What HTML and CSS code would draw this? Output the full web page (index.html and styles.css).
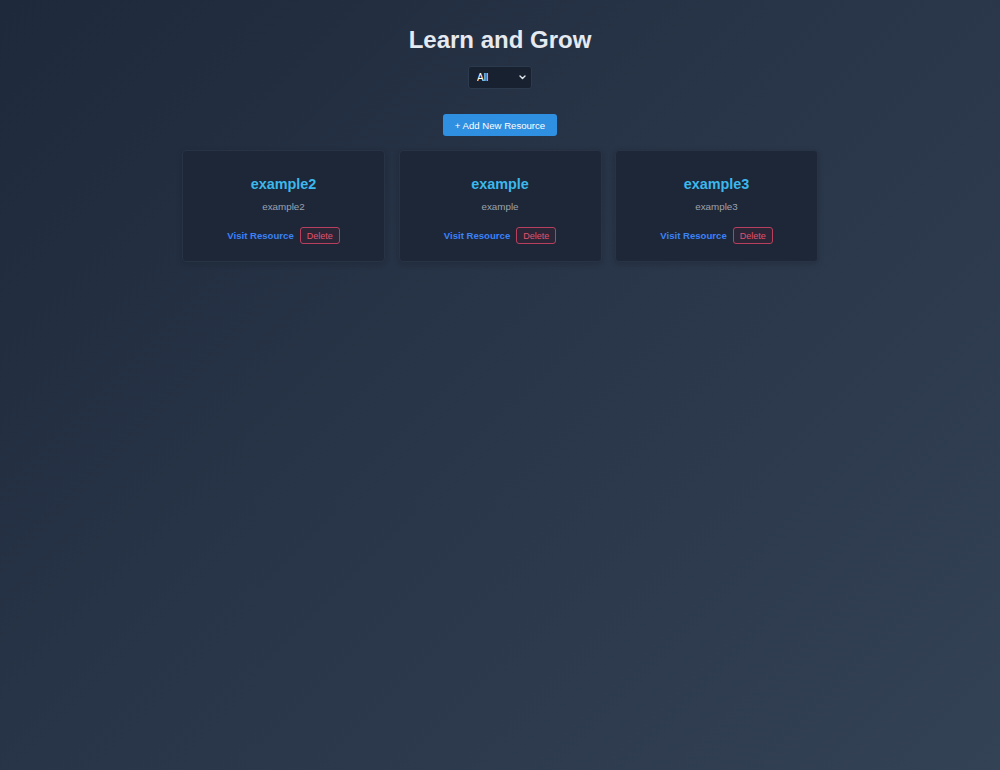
FILE: index.html
```html
<!DOCTYPE html>
<html lang="en">
<head>
    <meta charset="UTF-8">
    <meta name="viewport" content="width=device-width, initial-scale=1.0">
    <title>Learn and Grow</title>
    <link rel="stylesheet" href="styles.css">
</head>
<body>

    <div class="app">
        <h1>Learn and Grow</h1>

        <!-- category filter with a custom chevron -->
        <div class="filter-wrap">
            <select id="categoryFilter" class="filter">
                <option>All</option>
            </select>
            <svg class="filter-arrow" width="7" height="5" viewBox="0 0 7 5">
                <path d="M1 1 L3.5 3.5 L6 1" fill="none" stroke="#e2e8f0" stroke-width="1.4" stroke-linecap="round" stroke-linejoin="round"/>
            </svg>
        </div>

        <button class="add-button">+ Add New Resource</button>

        <div class="resource-list">
            <div class="resource-card">
                <h3>example2</h3>
                <p>example2</p>
                <div class="card-actions">
                    <a href="#" class="visit-link">Visit Resource</a>
                    <button class="delete-button">Delete</button>
                </div>
            </div>

            <div class="resource-card">
                <h3>example</h3>
                <p>example</p>
                <div class="card-actions">
                    <a href="#" class="visit-link">Visit Resource</a>
                    <button class="delete-button">Delete</button>
                </div>
            </div>

            <div class="resource-card">
                <h3>example3</h3>
                <p>example3</p>
                <div class="card-actions">
                    <a href="#" class="visit-link">Visit Resource</a>
                    <button class="delete-button">Delete</button>
                </div>
            </div>
        </div>
    </div>

</body>
</html>
```

FILE: styles.css
```css
/* page background */
html, body {
    height: 100%;
}

body {
    font-family: 'Liberation Sans', Arial, sans-serif;
    background: linear-gradient(135deg, #1e293b 0%, #344256 100%);
    background-attachment: fixed;
    color: #e2e8f0;
    margin: 0;
    padding: 0;
}

.app {
    display: flex;
    flex-direction: column;
    align-items: center;
    padding-top: 25px;
}

h1 {
    font-size: 24px;
    line-height: 30px;
    margin: 0;
    color: #e5e9f0;
}

.filter-wrap {
    position: relative;
    margin-top: 11px;
}

.filter {
    display: block;
    width: 64px;
    height: 23px;
    padding: 0 14px 0 8px;
    font-family: inherit;
    font-size: 10px;
    color: #ffffff;
    background-color: #18212f;
    border: 1px solid #2c3a4e;
    border-radius: 3px;
    appearance: none;
    -webkit-appearance: none;
}

.filter-arrow {
    position: absolute;
    right: 6px;
    top: 9px;
    pointer-events: none;
}

.add-button {
    margin-top: 25px;
    width: 114px;
    height: 22px;
    padding: 0;
    font-family: inherit;
    font-size: 9.6px;
    color: #ffffff;
    background-color: #2f8fe0;
    border: none;
    border-radius: 3px;
    cursor: pointer;
}

.resource-list {
    margin-top: 14px;
    width: 636px;
    display: grid;
    grid-template-columns: repeat(3, 1fr);
    gap: 13.5px;
}

.resource-card {
    background-color: #1e2738;
    border: 1px solid #283346;
    border-radius: 4px;
    box-shadow: 0 2px 6px rgba(0, 0, 0, 0.15);
    padding: 23px 16px 17px;
    text-align: center;
}

.resource-card h3 {
    margin: 0;
    font-size: 14.4px;
    line-height: 20px;
    color: #3bb8ec;
}

.resource-card p {
    margin: 7px 0 0;
    font-size: 9.8px;
    line-height: 12px;
    color: #9ca3af;
}

.card-actions {
    margin-top: 14px;
    display: flex;
    justify-content: center;
    align-items: center;
    gap: 6px;
}

.visit-link {
    font-size: 9.6px;
    font-weight: bold;
    color: #3b82f6;
    text-decoration: none;
}

.delete-button {
    height: 17px;
    padding: 0 6px;
    font-family: inherit;
    font-size: 9px;
    color: #e0526f;
    background-color: rgba(190, 40, 70, 0.08);
    border: 1px solid #b8405e;
    border-radius: 3px;
    cursor: pointer;
}
```
